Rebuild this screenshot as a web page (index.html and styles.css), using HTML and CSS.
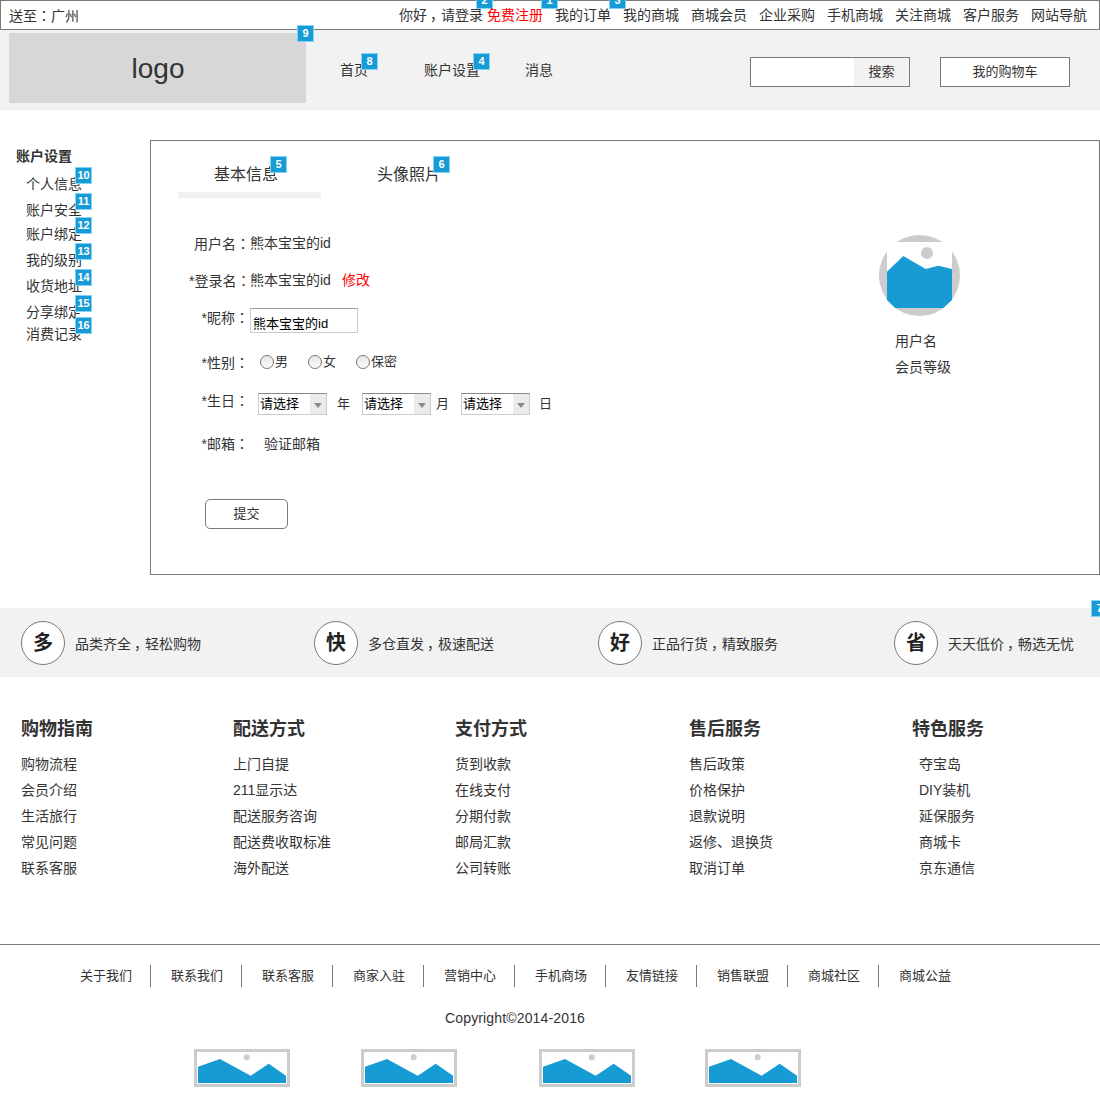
FILE: index.html
```html
<!DOCTYPE html>
<html>
<head>
  <meta charset="utf-8">
  <title>账户设置</title>
  <link rel="stylesheet" href="styles.css">
</head>
<body>
<div class="page">
  <svg class="defs" width="0" height="0">
    <symbol id="pic" viewBox="0 0 96 38">
      <rect x="1.5" y="1.5" width="93" height="35" fill="#fff" stroke="#ccc" stroke-width="3"/>
      <circle cx="52.7" cy="8.3" r="3" fill="#ccc"/>
      <polygon points="4,17.7 26,10 56.7,26.7 74.7,14.7 92,26.7 92,34 4,34" fill="#169bd5"/>
    </symbol>
  </svg>

  <!-- top bar -->
  <div class="topbar">
    <span>送至<span class="punct">：</span>广州</span>
    <div class="toplinks">
      <span class="mark login">你好<span class="comma">，</span>请登录<i class="badge b-login">2</i></span>
      <a class="mark red reg">免费注册<i class="badge b-reg">1</i></a>
      <a class="mark">我的订单<i class="badge b-order">3</i></a>
      <a>我的商城</a>
      <a>商城会员</a>
      <a>企业采购</a>
      <a>手机商城</a>
      <a>关注商城</a>
      <a>客户服务</a>
      <a>网站导航</a>
    </div>
  </div>

  <!-- header -->
  <div class="header">
    <div class="logo mark">logo<i class="badge b-logo">9</i></div>
    <div class="nav">
      <a class="mark">首页<i class="badge b-item">8</i></a>
      <a class="mark">账户设置<i class="badge b-item">4</i></a>
      <a>消息</a>
    </div>
    <div class="search">
      <input class="search-input" type="text">
      <span class="search-btn">搜索</span>
    </div>
    <div class="cart">我的购物车</div>
  </div>

  <!-- content -->
  <div class="content">
    <div class="sidebar">
      <div class="side-title">账户设置</div>
      <a class="side-item mark">个人信息<i class="badge b-item">10</i></a>
      <a class="side-item mark">账户安全<i class="badge b-item">11</i></a>
      <a class="side-item tight mark">账户绑定<i class="badge b-item">12</i></a>
      <a class="side-item mark">我的级别<i class="badge b-item">13</i></a>
      <a class="side-item mark">收货地址<i class="badge b-item">14</i></a>
      <a class="side-item mark">分享绑定<i class="badge b-item">15</i></a>
      <a class="side-item tighter mark">消费记录<i class="badge b-item">16</i></a>
    </div>

    <div class="panel">
      <div class="tabs">
        <div class="tab active"><span class="mark">基本信息<i class="badge b-tab">5</i></span></div>
        <div class="tab"><span class="mark">头像照片<i class="badge b-tab">6</i></span></div>
      </div>

      <div class="panel-body">
        <div class="form">
          <div class="row row-name"><label>用户名<span class="punct">：</span></label><span>熊本宝宝的id</span></div>
          <div class="row row-login"><label>*登录名<span class="punct">：</span></label><span>熊本宝宝的id</span><a class="red edit">修改</a></div>
          <div class="row row-nick"><label class="short">*昵称<span class="punct">：</span></label><input class="text-input" type="text" value="熊本宝宝的id"></div>
          <div class="row row-sex">
            <label class="short">*性别<span class="punct">：</span></label>
            <span class="radios">
              <span class="radio"><input type="radio" name="sex">男</span>
              <span class="radio"><input type="radio" name="sex">女</span>
              <span class="radio"><input type="radio" name="sex">保密</span>
            </span>
          </div>
          <div class="row row-birth">
            <label class="short">*生日<span class="punct">：</span></label>
            <span class="dates">
              <span class="select"><select><option>请选择</option></select></span>
              <span class="unit-year">年</span>
              <span class="select"><select><option>请选择</option></select></span>
              <span class="unit-month">月</span>
              <span class="select"><select><option>请选择</option></select></span>
              <span class="unit-day">日</span>
            </span>
          </div>
          <div class="row row-mail"><label class="short">*邮箱<span class="punct">：</span></label><a class="verify">验证邮箱</a></div>
          <button class="submit" type="button">提交</button>
        </div>

        <div class="profile">
          <svg class="avatar" width="81" height="81" viewBox="0 0 81 81">
            <circle cx="40.5" cy="40.5" r="40.5" fill="#ccc"/>
            <rect x="8" y="7" width="65" height="66" fill="#fff"/>
            <circle cx="48" cy="18" r="6" fill="#ccc"/>
            <polygon points="8,36.7 24.3,21 46.7,34 59.3,30.7 73,34 73,65 64.3,73 16,73 8,65" fill="#169bd5"/>
          </svg>
          <div class="profile-name">用户名</div>
          <div class="profile-level">会员等级</div>
        </div>
      </div>
    </div>
  </div>

  <!-- features -->
  <div class="features mark">
    <div class="feature"><span class="circle">多</span><span class="feature-text">品类齐全<span class="comma">，</span>轻松购物</span></div>
    <div class="feature"><span class="circle">快</span><span class="feature-text">多仓直发<span class="comma">，</span>极速配送</span></div>
    <div class="feature"><span class="circle">好</span><span class="feature-text">正品行货<span class="comma">，</span>精致服务</span></div>
    <div class="feature"><span class="circle">省</span><span class="feature-text">天天低价<span class="comma">，</span>畅选无忧</span></div>
    <i class="badge b-features">7</i>
  </div>

  <!-- help links -->
  <div class="help">
    <div class="help-col">
      <h3>购物指南</h3>
      <a>购物流程</a>
      <a>会员介绍</a>
      <a>生活旅行</a>
      <a>常见问题</a>
      <a>联系客服</a>
    </div>
    <div class="help-col">
      <h3>配送方式</h3>
      <a>上门自提</a>
      <a>211显示达</a>
      <a>配送服务咨询</a>
      <a>配送费收取标准</a>
      <a>海外配送</a>
    </div>
    <div class="help-col">
      <h3>支付方式</h3>
      <a>货到收款</a>
      <a>在线支付</a>
      <a>分期付款</a>
      <a>邮局汇款</a>
      <a>公司转账</a>
    </div>
    <div class="help-col">
      <h3>售后服务</h3>
      <a>售后政策</a>
      <a>价格保护</a>
      <a>退款说明</a>
      <a>返修、退换货</a>
      <a>取消订单</a>
    </div>
    <div class="help-col indent">
      <h3>特色服务</h3>
      <a>夺宝岛</a>
      <a>DIY装机</a>
      <a>延保服务</a>
      <a>商城卡</a>
      <a>京东通信</a>
    </div>
  </div>

  <!-- footer -->
  <div class="footer">
    <div class="footer-links">
      <a>关于我们</a>
      <a>联系我们</a>
      <a>联系客服</a>
      <a>商家入驻</a>
      <a>营销中心</a>
      <a>手机商场</a>
      <a>友情链接</a>
      <a>销售联盟</a>
      <a>商城社区</a>
      <a>商城公益</a>
    </div>
    <div class="copyright">Copyright©2014-2016</div>
    <div class="certs">
      <svg width="96" height="38"><use href="#pic"/></svg>
      <svg width="96" height="38"><use href="#pic"/></svg>
      <svg width="96" height="38"><use href="#pic"/></svg>
      <svg width="96" height="38"><use href="#pic"/></svg>
    </div>
  </div>
</div>
</body>
</html>
```

FILE: styles.css
```css
/* wireframe styles for the account page */
* {
  box-sizing: border-box;
}
body {
  margin: 0;
  font-family: "Liberation Sans", "Noto Sans CJK SC", sans-serif;
  font-size: 14px;
  line-height: 20px;
  color: #333;
  background-color: #fff;
}
.page {
  position: relative;
  height: 1110px;
  overflow: hidden;
}
.defs {
  position: absolute;
}
.red {
  color: #f00;
}
.mark {
  position: relative;
}
/* the reference sets commas and colons in the middle of the cell */
.punct {
  font-family: "Noto Sans CJK TC", sans-serif;
}
.comma {
  padding-left: 3px;
  margin-right: -3px;
}

/* numbered notes */
.badge {
  position: absolute;
  width: 17px;
  height: 17px;
  background-color: #169bd5;
  border: 1px solid #81d3f8;
  color: #fff;
  font-family: "Liberation Sans", sans-serif;
  font-size: 11px;
  font-weight: bold;
  font-style: normal;
  line-height: 15px;
  text-align: center;
}
.b-item {
  top: -7px;
  right: -10px;
}
.b-tab {
  top: -8px;
  right: -9px;
}
.b-logo {
  top: -8px;
  right: -8px;
}
.b-login {
  top: -13px;
  right: -10px;
}
.b-reg {
  top: -13px;
  right: -15px;
}
.b-order {
  top: -13px;
  right: -15px;
}
.b-features {
  top: -8px;
  right: -8px;
}

/* top bar */
.topbar {
  display: flex;
  justify-content: space-between;
  align-items: center;
  height: 30px;
  padding: 0 12px 0 8px;
  border: 1px solid #797979;
}
.toplinks {
  display: flex;
  gap: 12px;
}
.login {
  margin-right: -8px;
}

/* header */
.header {
  display: flex;
  align-items: flex-start;
  height: 80px;
  padding: 3px 30px 0 9px;
  background-color: #f2f2f2;
}
.logo {
  width: 297px;
  height: 70px;
  padding-left: 1px;
  background-color: #d7d7d7;
  font-size: 28px;
  line-height: 71px;
  text-align: center;
}
.nav {
  display: grid;
  grid-template-columns: 84px 101px auto;
  margin: 27px 0 0 34px;
}
.nav a {
  justify-self: start;
}
.search {
  display: flex;
  width: 160px;
  height: 30px;
  margin: 24px 0 0 auto;
  border: 1px solid #797979;
}
.search-input {
  width: 103px;
  border: 0;
  padding: 0;
  background-color: #fff;
}
.search-btn {
  flex: 1;
  font-size: 13px;
  line-height: 28px;
  text-align: center;
}
.cart {
  width: 130px;
  height: 30px;
  margin: 24px 0 0 30px;
  border: 1px solid #797979;
  background-color: #fff;
  font-size: 13px;
  line-height: 28px;
  text-align: center;
}

/* content */
.content {
  display: flex;
  margin-top: 30px;
}
.sidebar {
  width: 150px;
  padding: 6px 0 0 16px;
}
.side-title {
  font-weight: bold;
}
.side-item {
  display: block;
  width: 56px;
  margin: 6px 0 0 10px;
}
.side-title + .side-item {
  margin-top: 8px;
}
.side-item.tight {
  margin-top: 4px;
}
.side-item.tighter {
  margin-top: 2px;
}
.panel {
  flex: 1;
  height: 435px;
  border: 1px solid #797979;
}
.tabs {
  display: flex;
  margin: 0 0 0 27px;
  padding-top: 23px;
}
.tab {
  width: 143px;
  height: 34px;
  font-size: 16px;
  line-height: 22px;
  padding-left: 36px;
}
.tab + .tab {
  margin-left: 20px;
  padding-left: 36px;
}
.tab span {
  display: inline-block;
}
.tab.active {
  border-bottom: 6px solid #f2f2f2;
}
.panel-body {
  display: flex;
  justify-content: space-between;
}

/* form */
.form {
  padding-top: 35px;
}
.row {
  display: flex;
  align-items: center;
  height: 20px;
  padding-left: 38px;
}
.row label {
  width: 61px;
  text-align: right;
  white-space: nowrap;
}
.row label.short {
  width: 60px;
}
.row-login {
  margin-top: 17px;
}
.row-nick {
  height: 25px;
  margin-top: 18px;
}
.row-nick label {
  margin-bottom: 6px;
}
.text-input {
  width: 108px;
  height: 25px;
  margin-left: 1px;
  padding: 3px 2px 0;
  border: 1px solid #ccc;
  border-top-color: #999;
  font: inherit;
  font-size: 13px;
  color: #000;
}
.edit {
  margin-left: 11px;
}
.row-sex {
  margin-top: 19px;
}
.radios {
  display: flex;
  gap: 20px;
  margin-left: 11px;
  font-size: 13px;
}
.radio {
  display: flex;
  align-items: center;
}
.radio input {
  appearance: none;
  width: 14px;
  height: 14px;
  margin: 0 1px 0 0;
  border: 1px solid #777;
  border-radius: 50%;
  background: linear-gradient(#e8e8e8, #fafafa);
}
.row-birth {
  height: 22px;
  margin-top: 21px;
}
.row-birth label {
  margin-bottom: 7px;
}
.dates {
  display: flex;
  align-items: center;
  margin-left: 9px;
  font-size: 13px;
}
.select {
  position: relative;
  width: 69px;
  height: 22px;
}
.select select {
  appearance: none;
  width: 100%;
  height: 100%;
  padding: 0 0 0 1px;
  border: 1px solid #ccc;
  border-top-color: #888;
  border-radius: 0;
  background: linear-gradient(90deg, #fff 51px, #ebebeb 51px);
  font: inherit;
  color: #000;
}
.select::after {
  content: "";
  position: absolute;
  top: 10px;
  right: 5px;
  border: 4px solid transparent;
  border-top: 5px solid #888;
  border-bottom: 0;
}
.unit-year {
  margin: 0 12px 0 10px;
}
.unit-month {
  margin: 0 12px 0 5px;
}
.unit-day {
  margin-left: 9px;
}
.row-mail {
  margin-top: 19px;
}
.row-mail label {
  margin-bottom: 2px;
}
.verify {
  margin-left: 15px;
}
.submit {
  display: block;
  width: 83px;
  height: 30px;
  margin: 45px 0 0 54px;
  padding: 0;
  border: 1px solid #797979;
  border-radius: 5px;
  background-color: #fff;
  font: inherit;
  font-size: 13px;
  color: #333;
}
.profile {
  width: 220px;
  margin-top: 37px;
}
.profile-name {
  margin: 15px 0 0 16px;
}
.profile-level {
  margin: 6px 0 0 16px;
}
.avatar {
  display: block;
}

/* features */
.features {
  display: grid;
  grid-template-columns: 293px 284px 296px 1fr;
  align-items: center;
  height: 69px;
  margin-top: 33px;
  padding-left: 21px;
  background-color: #f2f2f2;
}
.feature {
  display: flex;
  align-items: center;
  white-space: nowrap;
}
.feature-text {
  margin-top: 2px;
}
.circle {
  width: 44px;
  height: 44px;
  margin-right: 10px;
  border: 1px solid #797979;
  border-radius: 50%;
  background-color: #fff;
  font-size: 20px;
  font-weight: bold;
  line-height: 42px;
  text-align: center;
  color: #222;
}

/* help links */
.help {
  display: grid;
  grid-template-columns: 212px 222px 234px 223px 1fr;
  height: 268px;
  padding: 40px 0 0 21px;
  border-bottom: 1px solid #797979;
}
.help-col h3 {
  margin: 0 0 10px;
  font-size: 18px;
  line-height: 24px;
}
.help-col a {
  display: block;
  line-height: 26px;
}
.help-col.indent a {
  margin-left: 7px;
}

/* footer */
.footer {
  height: 164px;
  border-bottom: 1px solid #797979;
}
.footer-links {
  display: flex;
  margin-top: 20px;
  padding-left: 60px;
}
.footer-links a {
  width: 91px;
  padding-left: 20px;
  font-size: 13px;
  line-height: 22px;
  border-left: 1px solid #797979;
}
.footer-links a:first-child {
  width: 90px;
  border-left: 0;
}
.copyright {
  margin-top: 21px;
  padding-left: 445px;
  letter-spacing: 0.15px;
}
.certs {
  display: grid;
  grid-template-columns: 167px 178px 166px 96px;
  margin-top: 21px;
  padding-left: 194px;
}
.certs svg {
  display: block;
}
```
